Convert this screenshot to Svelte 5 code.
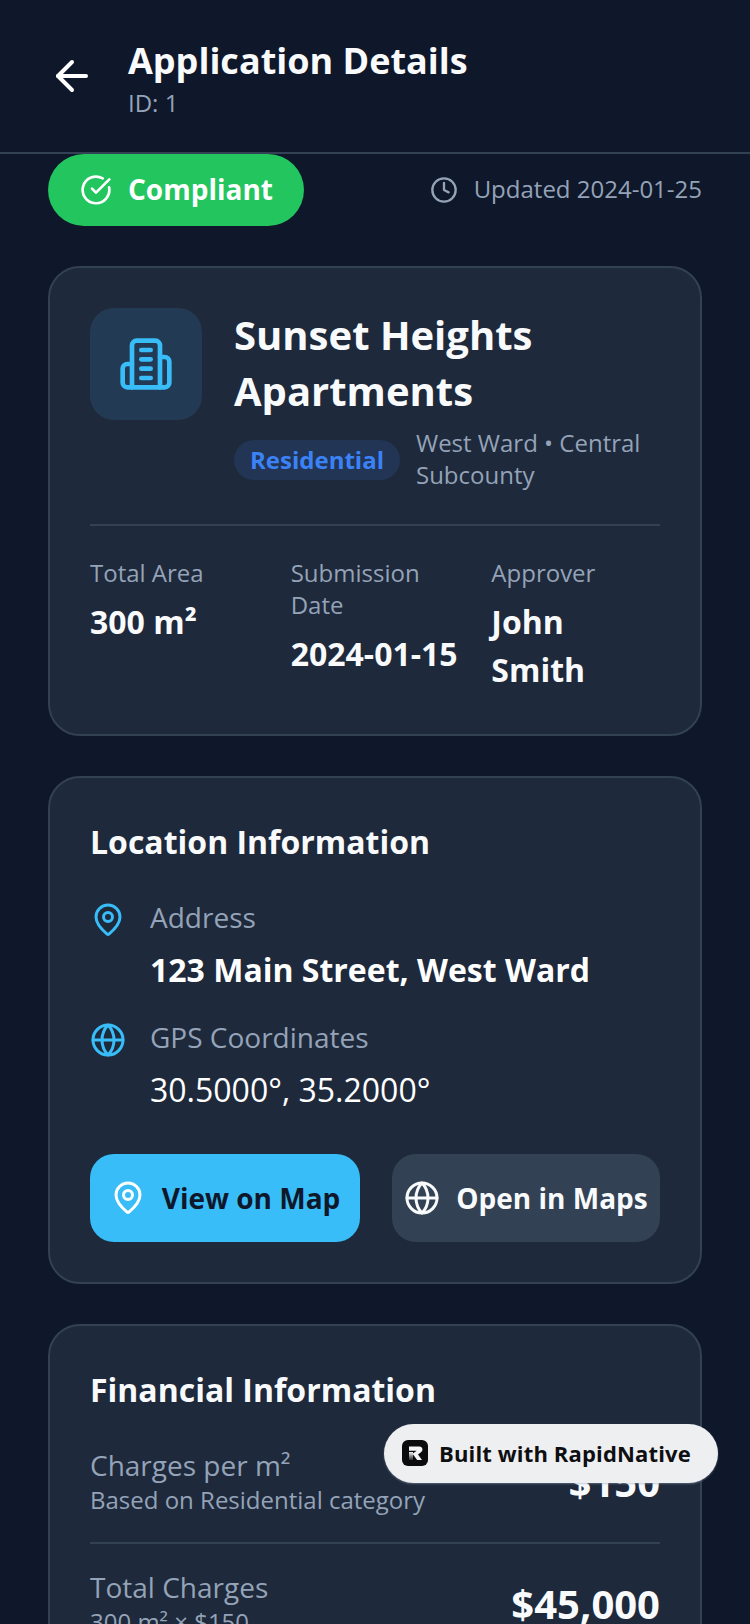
<script>
  const stats = [
    { label: 'Total Area', value: '300 m²' },
    { label: 'Submission Date', value: '2024-01-15' },
    { label: 'Approver', value: 'John Smith' }
  ];
</script>

{#snippet pin(cls)}
  <svg class={cls} viewBox="0 0 24 24" fill="none" stroke="currentColor" stroke-width="2" stroke-linecap="round" stroke-linejoin="round">
    <path d="M20 10c0 5-5.5 9.8-7.4 11.4a1 1 0 0 1-1.2 0C9.5 19.8 4 15 4 10a8 8 0 0 1 16 0" />
    <circle cx="12" cy="10" r="3" />
  </svg>
{/snippet}

{#snippet globe(cls)}
  <svg class={cls} viewBox="0 0 24 24" fill="none" stroke="currentColor" stroke-width="2" stroke-linecap="round" stroke-linejoin="round">
    <circle cx="12" cy="12" r="10" />
    <path d="M12 2a14.5 14.5 0 0 0 0 20 14.5 14.5 0 0 0 0-20" />
    <path d="M2 12h20" />
  </svg>
{/snippet}

<div class="screen">
  <header class="header">
    <svg class="back" viewBox="0 0 24 24" fill="none" stroke="currentColor" stroke-width="2" stroke-linecap="round" stroke-linejoin="round">
      <path d="m12 19-7-7 7-7" />
      <path d="M19 12H5" />
    </svg>
    <div class="head-text">
      <h1>Application Details</h1>
      <p>ID: 1</p>
    </div>
  </header>

  <main class="content">
    <div class="status-row">
      <div class="pill">
        <svg class="pill-icon" viewBox="0 0 24 24" fill="none" stroke="currentColor" stroke-width="2" stroke-linecap="round" stroke-linejoin="round">
          <path d="M21.8 10A10 10 0 1 1 17 3.3" />
          <path d="m9 11 3 3L22 4" />
        </svg>
        <span>Compliant</span>
      </div>
      <div class="updated">
        <svg class="clock" viewBox="0 0 24 24" fill="none" stroke="currentColor" stroke-width="2" stroke-linecap="round" stroke-linejoin="round">
          <circle cx="12" cy="12" r="10" />
          <path d="M12 6v6l4 2" />
        </svg>
        <span>Updated 2024-01-25</span>
      </div>
    </div>

    <section class="card">
      <div class="top">
        <div class="tile">
          <svg class="building" viewBox="0 0 24 24" fill="none" stroke="currentColor" stroke-width="2" stroke-linecap="round" stroke-linejoin="round">
            <path d="M6 22V4a2 2 0 0 1 2-2h8a2 2 0 0 1 2 2v18Z" />
            <path d="M6 12H4a2 2 0 0 0-2 2v6a2 2 0 0 0 2 2h2" />
            <path d="M18 9h2a2 2 0 0 1 2 2v9a2 2 0 0 1-2 2h-2" />
            <path d="M10 6h4" /><path d="M10 10h4" /><path d="M10 14h4" /><path d="M10 18h4" />
          </svg>
        </div>
        <div class="top-text">
          <h2>Sunset Heights Apartments</h2>
          <div class="tags">
            <span class="tag">Residential</span>
            <span class="ward">West Ward • Central Subcounty</span>
          </div>
        </div>
      </div>
      <div class="stats">
        {#each stats as s}
          <div class="stat">
            <div class="stat-label">{s.label}</div>
            <div class="stat-value">{s.value}</div>
          </div>
        {/each}
      </div>
    </section>

    <section class="card">
      <h3>Location Information</h3>
      <div class="loc">
        {@render pin('loc-icon')}
        <div>
          <div class="loc-label">Address</div>
          <div class="loc-strong">123 Main Street, West Ward</div>
        </div>
      </div>
      <div class="loc second">
        {@render globe('loc-icon')}
        <div>
          <div class="loc-label">GPS Coordinates</div>
          <div class="loc-plain">30.5000°, 35.2000°</div>
        </div>
      </div>
      <div class="buttons">
        <div class="btn primary">{@render pin('btn-icon')}<span>View on Map</span></div>
        <div class="btn secondary">{@render globe('btn-icon')}<span>Open in Maps</span></div>
      </div>
    </section>

    <section class="card">
      <h3>Financial Information</h3>
      <div class="fin first">
        <div>
          <div class="fin-label">Charges per m²</div>
          <div class="fin-sub">Based on Residential category</div>
        </div>
        <div class="fin-big">$150</div>
      </div>
      <div class="fin">
        <div>
          <div class="fin-label">Total Charges</div>
          <div class="fin-sub">300 m² × $150</div>
        </div>
        <div class="fin-big">$45,000</div>
      </div>
    </section>
  </main>

  <div class="badge">
    <svg class="logo" viewBox="0 0 26 26">
      <defs>
        <linearGradient id="stem" x1="0" y1="0" x2="0" y2="1">
          <stop offset="0" stop-color="#f4f4f5" />
          <stop offset="1" stop-color="#2a2a2d" />
        </linearGradient>
      </defs>
      <rect width="26" height="26" rx="6" fill="#0b0b0d" />
      <path d="M7 12h4v8H7Z" fill="url(#stem)" />
      <path d="M7 6.5h10.5a3 3 0 0 1 1.8 5.4L16 14.4l4 5.6h-4.8l-4.7-6.3 4.2-3H7Z" fill="#f4f4f5" />
    </svg>
    <span>Built with RapidNative</span>
  </div>
</div>

<style>
  :global(body) {
    margin: 0;
    background: #0f172a;
  }
  .screen {
    position: relative;
    width: 750px;
    height: 1624px;
    overflow: hidden;
    background: #0f172a;
    font-family: "Open Sans", sans-serif;
    color: #fff;
  }
  .header {
    display: flex;
    align-items: center;
    gap: 32px;
    height: 154px;
    padding: 0 48px;
    box-sizing: border-box;
    border-bottom: 2px solid #334155;
  }
  .back { width: 48px; height: 48px; color: #fff; flex: none; }
  .head-text { margin-top: 4px; }
  h1 { margin: 0; font-size: 36px; line-height: 48px; font-weight: 700; color: #f8fafc; }
  .head-text p { margin: 2px 0 0; font-size: 24px; line-height: 32px; color: #94a3b8; }
  .content { padding: 0 48px; }
  .status-row { display: flex; justify-content: space-between; align-items: center; }
  .pill {
    display: flex; align-items: center; gap: 16px;
    height: 72px; padding: 0 31px 0 32px;
    border-radius: 36px;
    background: #22c55e;
    font-size: 28px; font-weight: 700;
  }
  .pill span { padding-bottom: 2px; }
  .pill-icon { width: 32px; height: 32px; }
  .updated { display: flex; align-items: center; gap: 16px; color: #94a3b8; font-size: 24px; }
  .updated span { padding-bottom: 4px; }
  .clock { width: 28px; height: 28px; }
  .card {
    margin-top: 40px;
    padding: 40px;
    background: #1e293b;
    border: 2px solid #334155;
    border-radius: 32px;
  }
  .top { display: flex; gap: 32px; padding-bottom: 32px; border-bottom: 2px solid #334155; }
  .tile {
    flex: none; width: 112px; height: 112px;
    border-radius: 24px;
    background: #233a54;
    display: flex; align-items: center; justify-content: center;
    color: #38bdf8;
  }
  .building { width: 56px; height: 56px; }
  .top-text { margin-top: -1px; }
  h2 { margin: 0; font-size: 40px; line-height: 56px; font-weight: 700; color: #f8fafc; }
  .tags { display: flex; gap: 16px; align-items: flex-start; margin-top: 9px; }
  .tag {
    flex: none;
    margin-top: 12px;
    padding: 0 16px; height: 40px; line-height: 40px;
    border-radius: 20px;
    background: #223554;
    color: #3b82f6; font-size: 24px; font-weight: 700;
  }
  .ward { margin: -1px 0 1px; font-size: 24px; line-height: 32px; color: #94a3b8; }
  .stats { display: flex; padding-top: 31px; gap: 32px; }
  .stat { flex: 1 1 0; min-width: 0; }
  .stat-label { font-size: 24px; line-height: 32px; color: #94a3b8; }
  .stat-value { margin-top: 9px; font-size: 32px; line-height: 48px; font-weight: 700; color: #f8fafc; }
  h3 { margin: 0 0 32px; font-size: 32px; line-height: 48px; font-weight: 700; color: #f8fafc; }
  .loc { display: flex; gap: 24px; }
  .loc.second { margin-top: 24px; }
  .loc-icon { width: 36px; height: 36px; color: #38bdf8; flex: none; margin-top: 4px; }
  .loc-label { margin-top: -1px; font-size: 28px; line-height: 40px; color: #94a3b8; }
  .loc-strong { margin-top: 9px; font-size: 32px; line-height: 48px; font-weight: 700; }
  .loc-plain { margin-top: 9px; font-size: 32px; line-height: 48px; }
  .buttons { display: flex; gap: 32px; margin-top: 40px; }
  .btn {
    height: 88px; border-radius: 24px;
    display: flex; align-items: center; justify-content: center; gap: 16px;
    font-size: 28px; font-weight: 700; flex: 1 1 0;
  }
  .primary { flex-grow: 270; background: #38bdf8; color: #0f172a; }
  .primary .btn-icon { color: #fff; }
  .secondary { flex-grow: 268; background: #334155; color: #f8fafc; }
  .btn-icon { width: 36px; height: 36px; }
  .fin { display: flex; justify-content: space-between; align-items: center; padding: 24px 0; }
  .fin.first { border-bottom: 2px solid #334155; padding: 0 0 26px; }
  .fin-label { font-size: 28px; line-height: 38px; color: #94a3b8; }
  .fin-sub { font-size: 24px; line-height: 32px; color: #94a3b8; }
  .fin-big { font-size: 40px; font-weight: 700; color: #f8fafc; }
  .badge {
    position: absolute; left: 384px; top: 1424px;
    width: 334px; height: 59px; box-sizing: border-box;
    display: flex; align-items: center; gap: 11px; padding: 0 0 2px 18px;
    background: #eeeff1; border-radius: 30px;
    box-shadow: 0 1px 2px rgba(148, 163, 184, 0.5);
    color: #0f0f12; font-size: 22px; font-weight: 700; letter-spacing: 0.15px;
  }
  .logo { width: 26px; height: 26px; flex: none; }
</style>
